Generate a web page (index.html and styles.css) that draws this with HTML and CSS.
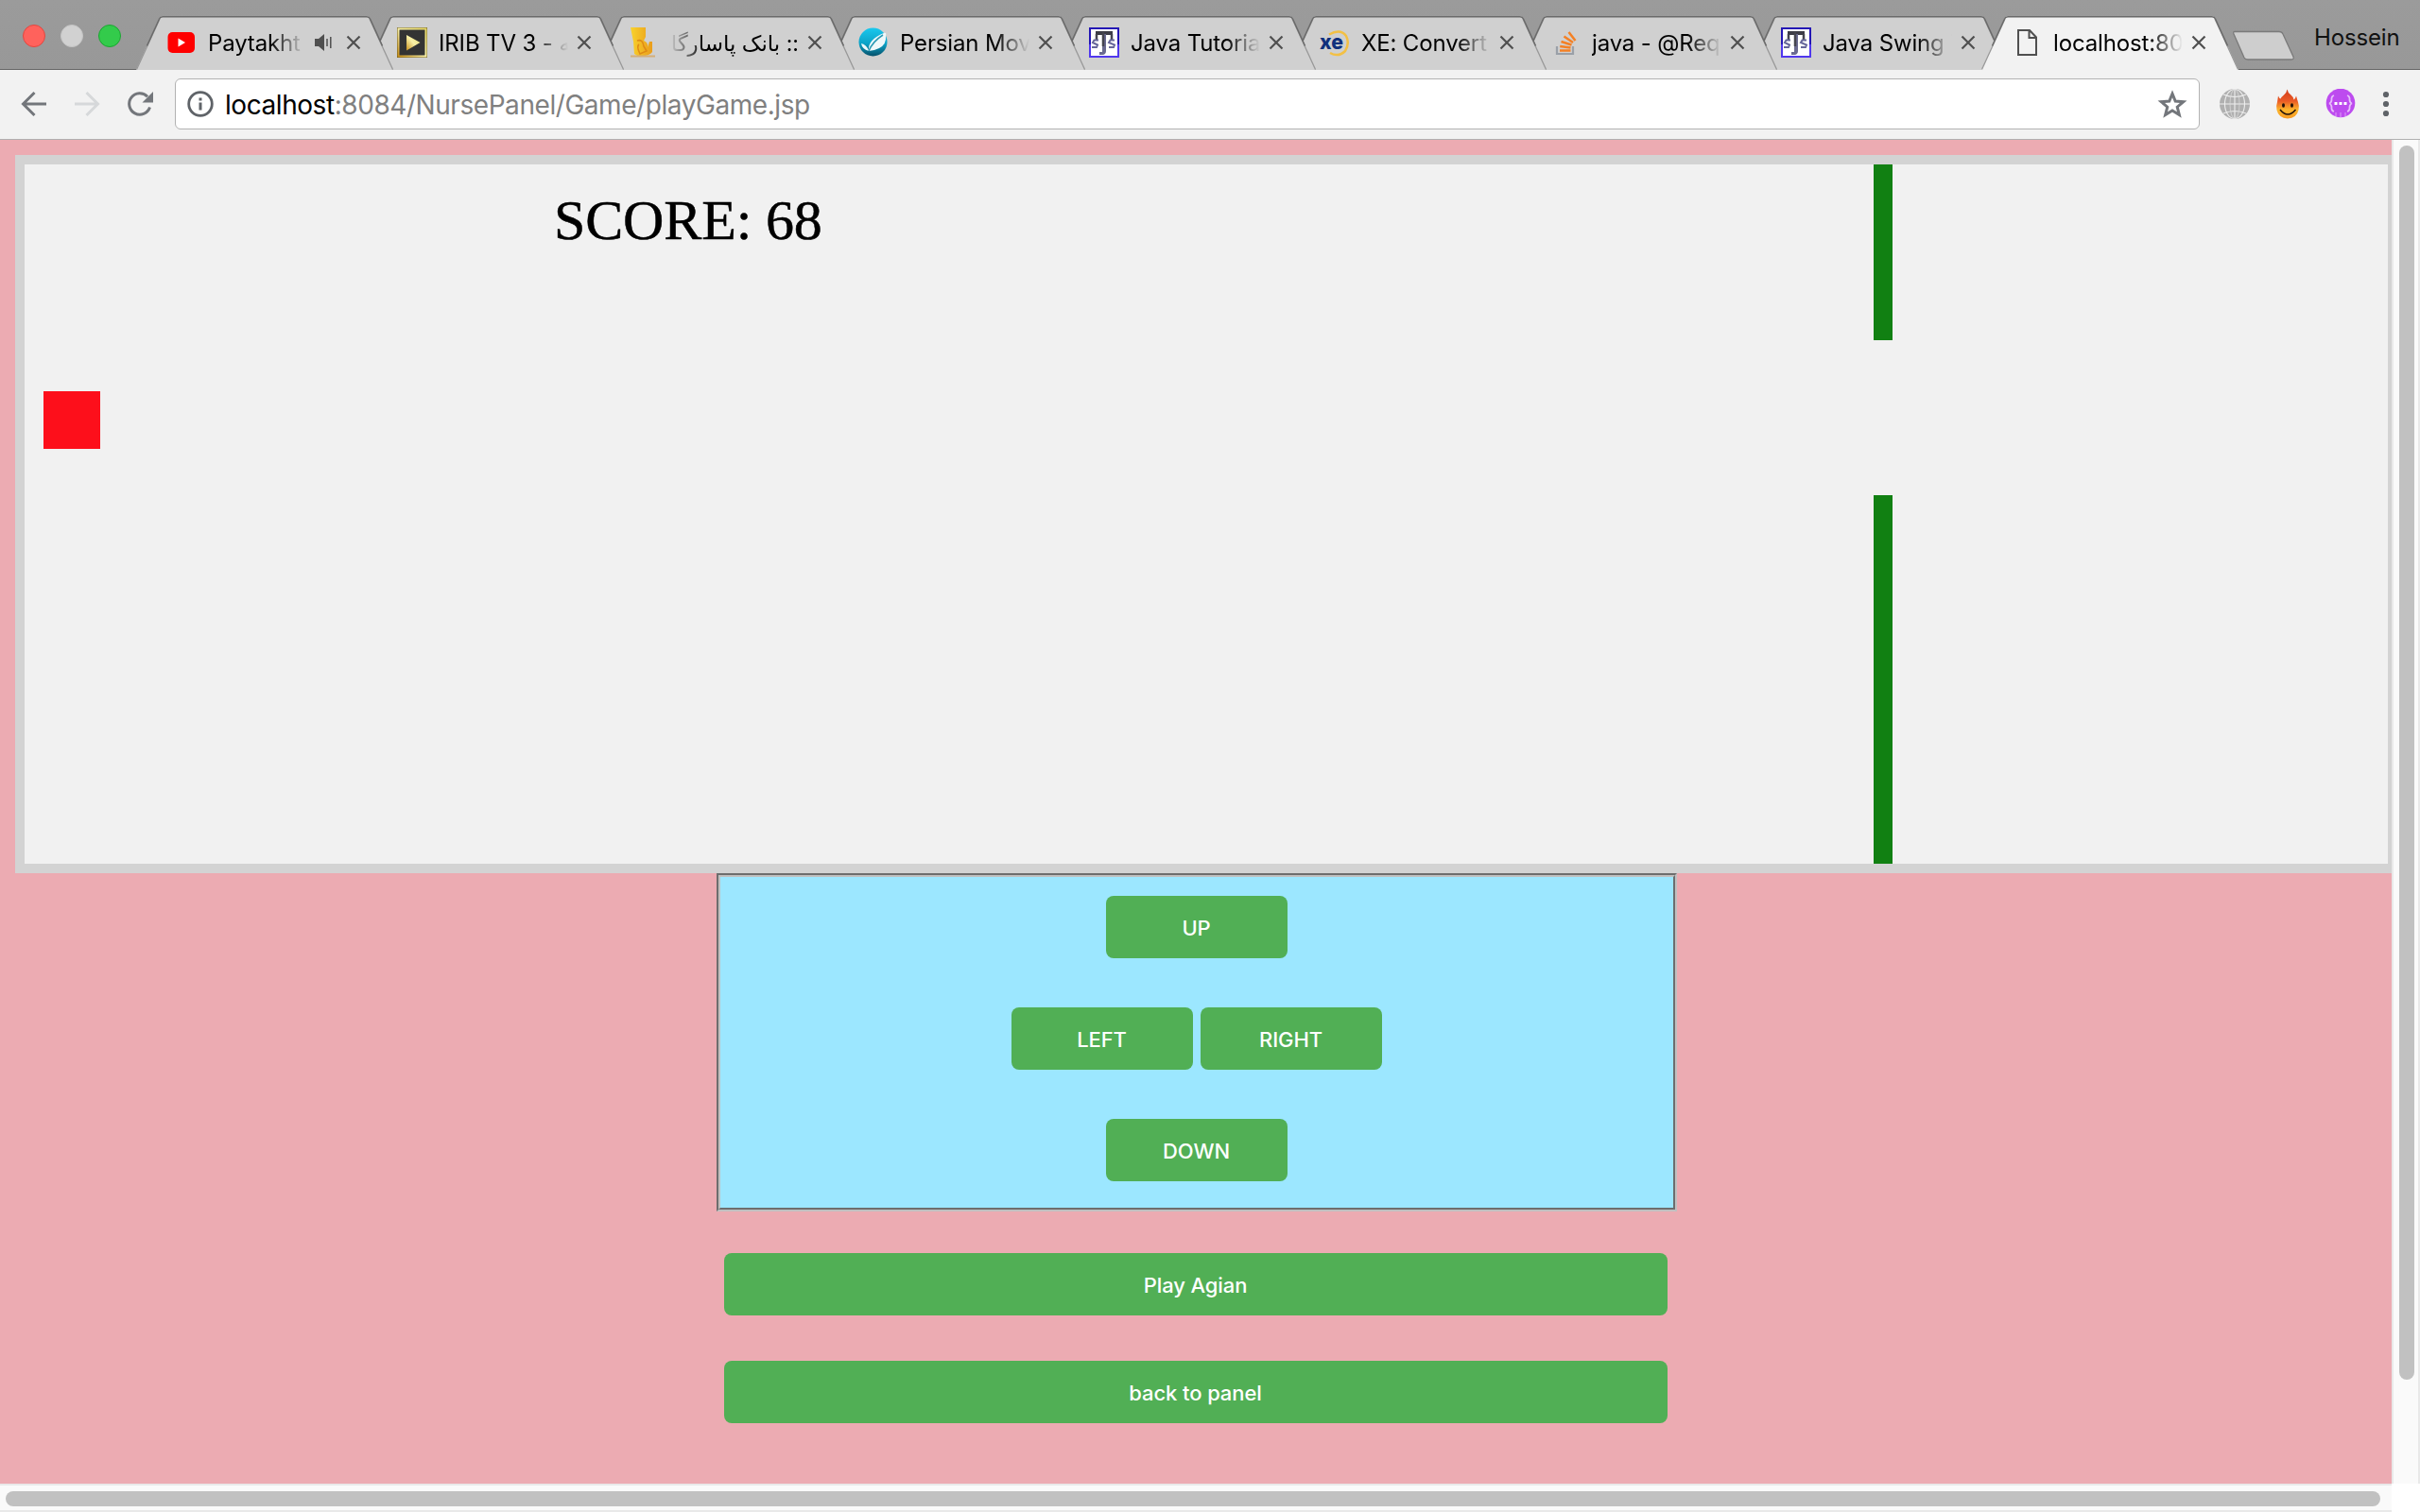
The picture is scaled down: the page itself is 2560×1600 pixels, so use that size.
FILE: index.html
```
<!DOCTYPE html>
<html lang="en">
<head>
<meta charset="utf-8">
<title>localhost:8084/NursePanel/Game/playGame.jsp</title>
<link rel="stylesheet" href="styles.css">
</head>
<body>
<svg class="defs" width="0" height="0" aria-hidden="true">
  <symbol id="tab-shape" viewBox="0 0 272 57">
    <path class="tab-fill" d="M0 57 24 3Q25.500 0 28 0H244Q246 0 247.500 3L272 57Z"/>
    <path class="tab-slope" d="M.5 56.500 25 3M247 3 271.500 56.500"/>
    <path class="tab-edge" d="M11.500 31.500 24.500 3Q25.500 .8 28 .8H244Q246.500 .8 247.500 3L260.500 31.500"/>
  </symbol>
  <symbol id="close" viewBox="0 0 16 16"><path d="M1.500 1.500 14.500 14.500M14.500 1.500 1.500 14.500" fill="none" stroke="#505050" stroke-width="2.200"/></symbol>
  <symbol id="tjs" viewBox="0 0 32 32">
    <rect width="32" height="32" fill="#2416b4"/><rect y="18" width="32" height="14" fill="#5038ee"/>
    <rect x="2" y="2" width="28" height="28" fill="#fff"/>
    <path d="M7 4H25V8H7Z" fill="#3c3c46"/><path d="M14 7H18V25Q18 28 15 29H11V26H14Z" fill="#6a6a90"/>
    <path d="M8 7V13M24 7V13M15 5V20" stroke="#44444e" stroke-width="2.500" fill="none"/>
    <path d="M10 13.500H5.500L4 16 9 18.500 8 21H3M27 13.500H22.500L21 16 27 18.500 26 21H21" stroke="#67679a" stroke-width="2" fill="none"/>
  </symbol>
</svg>

<header class="tabstrip">
  <div class="lights"><i class="light red"></i><i class="light gray"></i><i class="light green"></i></div>
  <div class="tabs">
    <div class="tab t1"><svg class="shape"><use href="#tab-shape"/></svg>
      <svg class="fav" viewBox="0 0 32 32"><rect x="1.500" y="5" width="28.500" height="22" rx="5" fill="#f00"/><path d="M12.500 11.500 20 16 12.500 20.500Z" fill="#fff"/></svg>
      <span class="title short">Paytakht</span>
      <svg class="sound" viewBox="0 0 20 20"><path d="M1 6H5L11 1V19L5 14H1Z" fill="#505050"/><path d="M14 6V14M17.800 4V16" stroke="#505050" stroke-width="1.500"/></svg>
      <svg class="x"><use href="#close"/></svg></div>
    <div class="tab t2"><svg class="shape"><use href="#tab-shape"/></svg>
      <svg class="fav" viewBox="0 0 32 32"><defs><linearGradient id="gold" x1="0" y1="1" x2="1" y2="0"><stop offset="0" stop-color="#c8901c"/><stop offset=".5" stop-color="#f8f0a8"/><stop offset="1" stop-color="#e6d868"/></linearGradient></defs><rect width="32" height="32" fill="#6a5a20"/><rect x="1.500" y="1.500" width="29" height="29" fill="#333" stroke="url(#gold)" stroke-width="2"/><path d="M10 8 24.500 16 10 24.500Z" fill="url(#gold)"/></svg>
      <span class="title">IRIB TV 3 - شبکه</span><svg class="x"><use href="#close"/></svg></div>
    <div class="tab t3"><svg class="shape"><use href="#tab-shape"/></svg>
      <svg class="fav" viewBox="0 0 32 32"><defs><linearGradient id="amber"><stop offset="0" stop-color="#f8d22c"/><stop offset="1" stop-color="#ea9d1c"/></linearGradient></defs><path d="M3 0H19V10L17 14Q22 16 21 21L23 15H26V26Q24 30 12 31L7 28 6 15Z" fill="url(#amber)"/><path d="M10 14Q16 12 17 20L20 25 13 28Q9 20 12 18" fill="none" stroke="#df8b16" stroke-width="1.600"/><path d="M3 30.500H29" stroke="#d4ae78" stroke-width="2"/></svg>
      <span class="title rtl" dir="rtl">:: بانک پاسارگاد</span><svg class="x"><use href="#close"/></svg></div>
    <div class="tab t4"><svg class="shape"><use href="#tab-shape"/></svg>
      <svg class="fav" viewBox="0 0 32 32"><defs><linearGradient id="teal" x1="0" y1="0" x2="0" y2="1"><stop offset="0" stop-color="#19c8ee"/><stop offset=".55" stop-color="#0ba3c8"/><stop offset="1" stop-color="#06506a"/></linearGradient></defs><circle cx="15.500" cy="15.500" r="15" fill="url(#teal)"/><path d="M3 17Q8 18 11 24Q10 13 27 6Q30 5 29 9Q30 18 22 22Q16 25 11 25Q4 23 3 17Z" fill="#eef8fa"/><path d="M11 25Q15 15 26 8" stroke="#2b9ab4" stroke-width="1.500" fill="none"/></svg>
      <span class="title">Persian Movies</span><svg class="x"><use href="#close"/></svg></div>
    <div class="tab t5"><svg class="shape"><use href="#tab-shape"/></svg>
      <svg class="fav"><use href="#tjs"/></svg><span class="title">Java Tutorial</span><svg class="x"><use href="#close"/></svg></div>
    <div class="tab t6"><svg class="shape"><use href="#tab-shape"/></svg>
      <svg class="fav" viewBox="0 0 32 32"><path d="M10 7.500Q22 1 28 9Q32 17 27 25Q20 32 11 27" fill="none" stroke="#f3c044" stroke-width="2.500"/><text class="xe" x="0" y="23" textLength="25" lengthAdjust="spacingAndGlyphs">xe</text></svg>
      <span class="title">XE: Convert C</span><svg class="x"><use href="#close"/></svg></div>
    <div class="tab t7"><svg class="shape"><use href="#tab-shape"/></svg>
      <svg class="fav" viewBox="0 0 32 32"><path d="M7 20V28H24V20" fill="none" stroke="#9aa0a8" stroke-width="2.200"/><path d="M10 24.500H21.500M10.200 20 21.500 21.500M11.500 15 22.500 18.500M14.500 9.500 24 16M19.500 5 26.500 14" stroke="#f48024" stroke-width="2.500"/></svg>
      <span class="title">java - @Requ</span><svg class="x"><use href="#close"/></svg></div>
    <div class="tab t8"><svg class="shape"><use href="#tab-shape"/></svg>
      <svg class="fav"><use href="#tjs"/></svg><span class="title">Java Swing T</span><svg class="x"><use href="#close"/></svg></div>
    <div class="tab t9 active"><svg class="shape"><use href="#tab-shape"/></svg>
      <svg class="fav" viewBox="0 0 32 32"><path d="M7 3H19L26 10.500V29H7ZM18.500 3V11H26" fill="none" stroke="#505050" stroke-width="2"/></svg>
      <span class="title">localhost:8084</span><svg class="x"><use href="#close"/></svg></div>
  </div>
  <svg class="newtab" viewBox="0 0 68 34"><path d="M3 1.500H50Q53 1.500 54 4L65 28Q66 31 63 31H17Q14 31 13 29L2 4Q1 1.500 3 1.500Z" fill="#cecece" stroke="#7a7a7a" stroke-width="1.300"/></svg>
  <span class="profile">Hossein</span>
</header>

<nav class="toolbar">
  <svg class="nav-icon back" viewBox="0 0 28 28"><path d="M27 14H3M14.500 2 2.500 14 14.500 26" fill="none" stroke="#73767b" stroke-width="3"/></svg>
  <svg class="nav-icon forward" viewBox="0 0 28 28"><path d="M1 14H25M13.500 2 25.500 14 13.500 26" fill="none" stroke="#d6d8da" stroke-width="3"/></svg>
  <svg class="nav-icon reload" viewBox="0 0 28 28"><path d="M24.500 17.500A11.200 11.200 0 1 1 22 6.200" fill="none" stroke="#73767b" stroke-width="3"/><path d="M28 1V12.500H16.500Z" fill="#73767b"/></svg>
  <div class="address">
    <svg class="info" viewBox="0 0 28 28"><circle cx="14" cy="14" r="12.300" fill="none" stroke="#5f6368" stroke-width="2.800"/><path d="M12.500 12.500H15.500V20.500H12.500ZM12.500 7.500H15.500V10.500H12.500Z" fill="#5f6368"/></svg>
    <span class="url"><b>localhost</b>:8084/NursePanel/Game/playGame.jsp</span>
    <svg class="star" viewBox="0 0 30 28"><path d="M15 3.800 18 11.200 26 11.800 19.900 17 21.900 24.800 15 20.600 8.100 24.800 10.100 17 4 11.800 12 11.200Z" fill="none" stroke="#73767b" stroke-width="2.800"/></svg>
  </div>
  <svg class="ext" viewBox="0 0 32 32"><circle cx="16" cy="16" r="16" fill="#b0b0b0"/><path d="M16 0V32M0 16H32M4 6Q16 11 28 6M4 26Q16 21 28 26" fill="none" stroke="#eee" stroke-width="1.100"/><ellipse cx="16" cy="16" rx="10.500" ry="15.500" fill="none" stroke="#eee" stroke-width="1.100"/><ellipse cx="16" cy="16" rx="5" ry="15.500" fill="none" stroke="#ddd" stroke-width=".7"/></svg>
  <svg class="ext flame" viewBox="0 0 32 32"><defs><linearGradient id="fire" x1="0" y1="0" x2="0" y2="1"><stop offset="0" stop-color="#d23c18"/><stop offset=".4" stop-color="#ea5a26"/><stop offset=".7" stop-color="#fcb52c"/><stop offset="1" stop-color="#f79a22"/></linearGradient></defs><path d="M15.500 .5Q16 4 19.500 6.500Q22 8.500 22.500 11.500Q24.500 10 25 7.500Q26 11 27 14Q28.500 18 27.500 22.500Q25.500 31 16 31.500Q6.500 31 4.500 22.500Q3.500 18 5 14L6 7.500Q7 10 8.500 10.500Q9.500 8.500 12 6.500Q15 4 15.500 .5Z" fill="url(#fire)"/><ellipse cx="11.500" cy="17.500" rx="1.500" ry="2.200" fill="#201008"/><ellipse cx="20.500" cy="17.500" rx="1.500" ry="2.200" fill="#201008"/><path d="M8 22Q16 32 24.500 22" fill="none" stroke="#201008" stroke-width="1.500"/></svg>
  <svg class="ext purple" viewBox="0 0 32 32"><circle cx="16" cy="15" r="15.300" fill="#bd4bef"/><path d="M9 7Q6 8 6.500 12Q6 15 4 15.500Q6 16 6.500 19Q6 23 9 24M23 7Q26 8 25.500 12Q26 15 28 15.500Q26 16 25.500 19Q26 23 23 24" fill="none" stroke="#e7bdfb" stroke-width="1.800"/><path d="M9.500 15.500H12.500M14.500 15.500H17.500M19.500 15.500H22.500" stroke="#fff" stroke-width="2.800"/><path d="M11 25V29M16 25V30M21 25V29" stroke="#d98ff7" stroke-width="1.200"/></svg>
  <svg class="more" viewBox="0 0 8 28"><circle cx="4" cy="4" r="3.100"/><circle cx="4" cy="14" r="3.100"/><circle cx="4" cy="24" r="3.100"/></svg>
</nav>

<div class="viewport">
  <main class="page">
    <section class="game">
      <span class="score">SCORE: 68</span>
      <i class="player"></i>
      <i class="wall upper"></i>
      <i class="wall lower"></i>
    </section>
    <section class="panel">
      <div class="pad">
        <div class="row"><button class="btn">UP</button></div>
        <div class="row"><button class="btn">LEFT</button><button class="btn">RIGHT</button></div>
        <div class="row"><button class="btn">DOWN</button></div>
      </div>
    </section>
    <div class="actions">
      <button class="btn wide">Play Agian</button>
      <button class="btn wide">back to panel</button>
    </div>
  </main>
  <aside class="vbar"><i class="vthumb"></i></aside>
  <footer class="hbar"><i class="hthumb"></i></footer>
</div>
</body>
</html>
```
FILE: styles.css
```
* { box-sizing: border-box; }
html, body { margin: 0; width: 2560px; height: 1600px; overflow: hidden; }
body { display: flex; flex-direction: column; background: #fff; font-family: Inter, "DejaVu Sans", sans-serif; }
svg { display: block; flex: none; }
.defs { position: absolute; }

/* Tab strip */
.tabstrip { height: 74px; flex: none; display: flex; background: linear-gradient(#9b9b9b, #989898); box-shadow: inset 0 -1px #666; }
.lights { width: 144px; height: 50px; padding: 26px 0 0 24px; display: flex; gap: 16px; flex: none; }
.light { width: 24px; height: 24px; border-radius: 50%; }
.red { background: #ff625c; border: 1px solid #e2463f; }
.gray { background: #d1d1d1; border: 1px solid #c4c4c4; }
.green { background: #33cb4b; border: 1px solid #1ca532; }
.tabs { display: flex; padding-top: 17px; isolation: isolate; }
.tab { position: relative; width: 272px; height: 57px; margin-right: -28px; padding: 0 0 1px 32px; display: flex; align-items: center; flex: none; }
.tab.active { margin-right: 0; }
.t1 { z-index: 8; } .t2 { z-index: 7; } .t3 { z-index: 6; } .t4 { z-index: 5; } .t5 { z-index: 4; }
.t6 { z-index: 3; } .t7 { z-index: 2; } .t8 { z-index: 1; } .t9 { z-index: 9; }
.shape { position: absolute; left: 0; top: 0; width: 272px; height: 57px; z-index: -1; }
.tab-fill { fill: #d0d0d0; }
.active .shape { --tab: #f2f2f2; }
.tab-fill { fill: var(--tab, #d0d0d0); }
.tab-slope { fill: none; stroke: #999; stroke-width: 1.3; }
.tab-edge { fill: none; stroke: #6a6a6a; stroke-width: 1.5; }
.tab:not(.active) { box-shadow: inset 0 -1px #666; }
.fav { width: 32px; height: 32px; margin-right: 12px; }
.title { width: 137px; height: 36px; padding-top: 2px; line-height: 34px; font-size: 24px; letter-spacing: -.15px; white-space: nowrap; overflow: hidden; color: #000;
  -webkit-mask-image: linear-gradient(to right, #000 calc(100% - 36px), transparent); mask-image: linear-gradient(to right, #000 calc(100% - 36px), transparent); }
.title.short { width: 102px; margin-right: 10px; }
.title.rtl { letter-spacing: 0; font-size: 23px;
  -webkit-mask-image: linear-gradient(to left, #000 calc(100% - 38px), transparent); mask-image: linear-gradient(to left, #000 calc(100% - 38px), transparent); }
.sound { width: 20px; height: 20px; margin-right: -4px; }
.x { width: 16px; height: 16px; margin-left: 9px; }
.title.short ~ .x { margin-left: 18px; }
.xe { font: 800 22px Inter, sans-serif; fill: #10307c; }
.newtab { width: 68px; height: 34px; margin: 32px 0 0 -7px; }
.profile { margin: 23px 0 0 19px; height: 34px; line-height: 34px; font-size: 24px; letter-spacing: -.15px; color: #111; }

/* Toolbar */
.toolbar { height: 74px; flex: none; display: flex; align-items: center; padding: 0 0 1px 22px; background: #f2f2f2; border-bottom: 1px solid #b0b0b0; }
.nav-icon { width: 28px; height: 28px; margin-right: 28px; }
.reload { margin-right: 23px; }
.address { width: 2142px; height: 54px; display: flex; align-items: center; padding: 0 12px; background: #fff; border: 1px solid #b2b2b2; border-radius: 6px; flex: none; }
.info { margin-right: 12px; width: 28px; height: 28px; }
.url { flex: 1; padding-top: 2px; font-size: 28px; line-height: 36px; letter-spacing: -.44px; color: #808080; }
.url b { font-weight: 400; color: #000; }
.star { width: 32px; height: 30px; }
.ext { width: 32px; height: 32px; margin-left: 21px; }
.flame, .purple { margin-left: 24px; }
.more { width: 8px; height: 28px; margin-left: 28px; fill: #5f6368; }

/* Page viewport */
.viewport { flex: 1; display: grid; grid-template: 1422px 30px / 2530px 30px; }
.page { background: #ecabb2; padding: 16px 0 0 16px; overflow: hidden; display: flex; flex-direction: column; }
.game { position: relative; width: 2520px; height: 760px; flex: none; background: #f1f1f1; border: 10px solid #d3d3d3; }
.score { position: absolute; left: 560px; top: 25px; font: 60px/68px "Liberation Serif", serif; letter-spacing: -.15px; -webkit-text-stroke: .5px #000; color: #000; white-space: nowrap; }
.player { position: absolute; left: 19.500px; top: 239.500px; width: 60.500px; height: 61px; background: #fd0f1b; }
.wall { position: absolute; left: 1956px; width: 20px; background: #118012; }
.upper { top: 0; height: 186px; }
.lower { top: 350px; height: 390px; }
.panel { width: 1016px; height: 358px; margin-left: 742px; flex: none; border: 2px solid; border-color: #6d6d6d #c0c0c0 #c0c0c0 #6d6d6d; }
.pad { height: 354px; padding-top: 20px; display: flex; flex-direction: column; gap: 52px; background: #9ce7ff; border: 2px solid; border-color: #c0c0c0 #6d6d6d #6d6d6d #c0c0c0; }
.row { display: flex; justify-content: center; gap: 8px; }
.btn { width: 192px; height: 66px; padding: 1px 1px 0 0; border: 0; border-radius: 8px; background: #51af55; color: #fff; font: 500 22px/30px Inter, sans-serif; letter-spacing: -.1px; }
.actions { width: 998px; margin: 44px 0 0 750px; display: flex; flex-direction: column; gap: 48px; }
.wide { width: 998px; }

/* Scrollbars */
.vbar { background: #fafafa; border: solid #e9e9e9; border-width: 0 2px; padding: 6px 0 0 6px; }
.vthumb { display: block; width: 16px; height: 1306px; border-radius: 8px; background: #c1c1c1; }
.hbar { background: #fafafa; border: solid #e9e9e9; border-width: 2px 0; padding: 6px 0 0 6px; }
.hthumb { display: block; width: 2512px; height: 16px; border-radius: 8px; background: #c1c1c1; }
```
